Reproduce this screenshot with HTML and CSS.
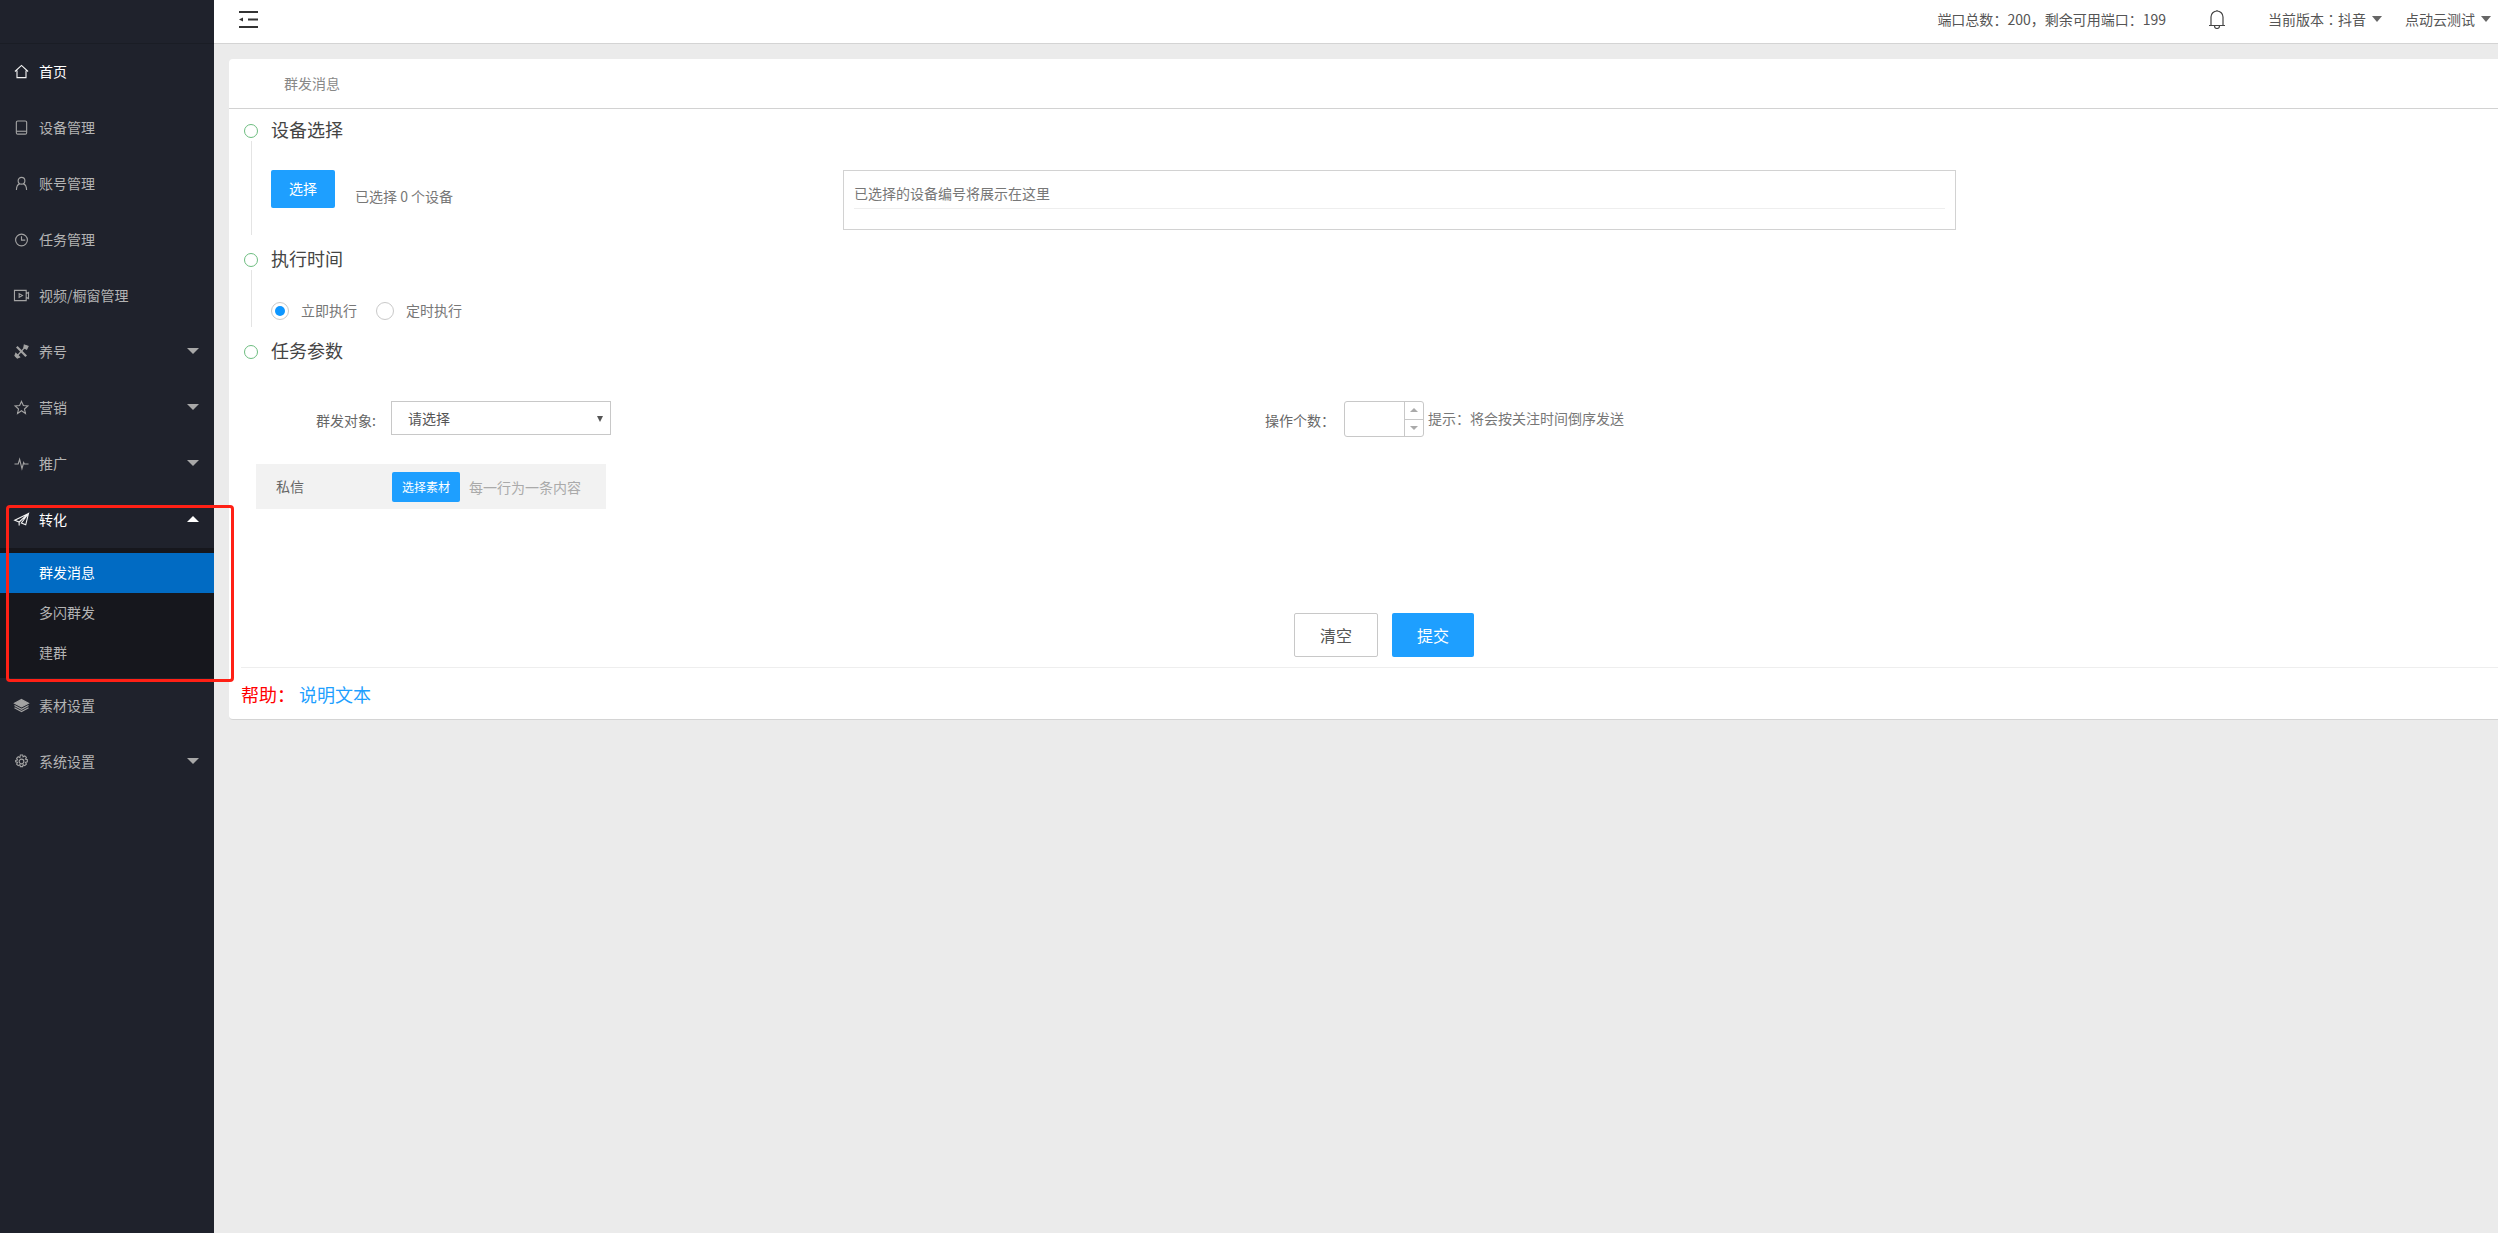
FILE: index.html
```html
<!DOCTYPE html>
<html lang="zh-CN">
<head>
<meta charset="utf-8">
<title>群发消息</title>
<link rel="stylesheet" href="styles.css">
</head>
<body>
<div class="app">
  <aside class="sidebar">
    <div class="logo"></div>
    <nav class="menu">
      <a class="item active"><svg class="ico" viewBox="0 0 16 16"><path d="M1 8 8 1.500 15 8M3.200 7v7.500h9.600V7"/></svg><span>首页</span></a>
      <a class="item"><svg class="ico" viewBox="0 0 16 16"><rect x="2.500" y="1" width="11" height="14" rx="1.500"/><path d="M2.500 12h11"/></svg><span>设备管理</span></a>
      <a class="item"><svg class="ico" viewBox="0 0 16 16"><circle cx="8" cy="5" r="3.600"/><path d="M2.600 15c0-4 2-6.200 3.400-6.600M13.400 15c0-4-2-6.200-3.400-6.600"/></svg><span>账号管理</span></a>
      <a class="item"><svg class="ico" viewBox="0 0 16 16"><circle cx="8" cy="8.500" r="6.300"/><path d="M8 4.500v4.200h4"/></svg><span>任务管理</span></a>
      <a class="item"><svg class="ico" viewBox="0 0 16 16"><path d="M.5 2.500h12.500v11H.5zM13 6l2.500-1.200v6.400L13 10"/><path d="M5.500 6 9 8l-3.500 2z"/></svg><span>视频/橱窗管理</span></a>
      <a class="item"><svg class="ico" viewBox="0 0 16 16"><path d="m3 3 10 10" stroke-width="2.400"/><path d="M13 2 3.500 12.500" stroke-width="1.400"/><path class="fill" d="m2 10 4 4-2.500 1L1 12.500zM11 1l4 1.500-1.500 3-3-1.500z"/></svg><span>养号</span><i class="caret"></i></a>
      <a class="item"><svg class="ico" viewBox="0 0 16 16"><path d="m8 1.500 2 4.400 4.800.5-3.600 3.200 1 4.700L8 11.400l-4.200 2.900 1-4.700L1.200 6.400 6 5.900z"/></svg><span>营销</span><i class="caret"></i></a>
      <a class="item"><svg class="ico" viewBox="0 0 16 16"><path d="M.5 8.500h4l1.500-5 2.500 10 1.800-6.500.8 1.500h4.400"/></svg><span>推广</span><i class="caret"></i></a>
      <a class="item active"><svg class="ico" viewBox="0 0 16 16"><path d="M15.500 1.500.8 8.800l4.700 1.900L15.500 1.500 7.800 11.700l4.700 2zM5.500 10.700v3.800"/></svg><span>转化</span><i class="caret up"></i></a>
      <div class="submenu">
        <a class="sub current">群发消息</a>
        <a class="sub">多闪群发</a>
        <a class="sub">建群</a>
      </div>
      <a class="item"><svg class="ico" viewBox="0 0 16 16"><path class="fill" d="M8 1.500 15.500 5.500 8 9.500.5 5.500z"/><path d="M.5 8 8 12l7.500-4M.5 10.500 8 14.500l7.500-4"/></svg><span>素材设置</span></a>
      <a class="item"><svg class="ico" viewBox="0 0 16 16"><circle cx="8" cy="8" r="2.500"/><path d="M6.800 1h2.400l.5 2 1.800-1 1.700 1.700-1 1.800 2 .5v2.400l-2 .5 1 1.800-1.700 1.700-1.800-1-.5 2H6.800l-.5-2-1.800 1-1.700-1.700 1-1.800-2-.5V6.900l2-.5-1-1.800 1.700-1.700 1.800 1z"/></svg><span>系统设置</span><i class="caret"></i></a>
    </nav>
  </aside>

  <main class="main">
    <header class="topbar">
      <svg class="toggle" viewBox="0 0 19 17"><path d="M0 1h19M9 8.500h10M0 16h19"/><path class="solid" d="M4 6.500v4L0 8.500z"/></svg>
      <div class="top-right">
        <span>端口总数<span class="p">：</span>200<span class="p">，</span>剩余可用端口<span class="p">：</span>199</span>
        <svg class="bell" viewBox="0 0 18 20"><path d="M1 16.500h16M3 16.500V8a6 6 0 0 1 12 0v8.500M9 2V1M6.500 17a2.500 2.500 0 0 0 5 0"/></svg>
        <span class="drop">当前版本<span class="p">：</span>抖音<i class="tri"></i></span>
        <span class="drop">点动云测试<i class="tri"></i></span>
      </div>
    </header>

    <section class="card">
      <div class="tabs">群发消息</div>

      <div class="step step-one">
        <div class="rail"><b class="dot"></b><b class="line"></b></div>
        <div class="body">
          <h3 class="title">设备选择</h3>
          <div class="device-row">
            <div class="device-left">
              <button class="btn btn-pick">选择</button>
              <span class="count">已选择 0 个设备</span>
            </div>
            <div class="device-box"><div class="device-hint">已选择的设备编号将展示在这里</div></div>
          </div>
        </div>
      </div>

      <div class="step step-two">
        <div class="rail"><b class="dot"></b><b class="line"></b></div>
        <div class="body">
          <h3 class="title">执行时间</h3>
          <div class="radios">
            <span class="radio on"></span><span class="radio-label">立即执行</span>
            <span class="radio"></span><span class="radio-label">定时执行</span>
          </div>
        </div>
      </div>

      <div class="step step-three">
        <div class="rail"><b class="dot"></b></div>
        <div class="body"><h3 class="title">任务参数</h3></div>
      </div>

      <div class="form">
        <div class="form-row">
          <label class="label">群发对象:</label>
          <div class="select">请选择<i class="select-arrow"></i></div>
          <label class="label-count">操作个数<span class="p">：</span></label>
          <div class="spinner">
            <div class="spin-input"></div>
            <div class="spin-btns"><span class="spin"><i class="spin-up"></i></span><span class="spin"><i class="spin-down"></i></span></div>
          </div>
          <span class="tip">提示<span class="p">：</span>将会按关注时间倒序发送</span>
        </div>
        <div class="panel">
          <span class="panel-name">私信</span>
          <button class="btn btn-material">选择素材</button>
          <span class="panel-tip">每一行为一条内容</span>
        </div>
      </div>

      <div class="actions">
        <button class="btn btn-clear">清空</button>
        <button class="btn btn-submit">提交</button>
      </div>

      <div class="help"><span class="help-key">帮助<span class="p">：</span></span><a class="help-link">说明文本</a></div>
    </section>
  </main>
</div>
<div class="annotation"></div>
</body>
</html>
```
FILE: styles.css
```css
* { box-sizing: border-box; }
html, body { margin: 0; padding: 0; height: 100%; overflow: hidden; }
body {
  font-family: "Noto Sans CJK SC", "Liberation Sans", sans-serif;
  font-size: 14px;
  line-height: 20px;
  color: #666;
  background: #ebebeb;
}
.app { display: flex; height: 1233px; }
/* centred full-width punctuation, as in the reference */
.p { font-family: "Noto Sans CJK TC", "Noto Sans CJK SC", sans-serif; }

/* sidebar */
.sidebar { width: 214px; flex: none; background: #1f222c; color: #b4b4b4; }
.logo { height: 44px; border-bottom: 1px solid #1a1d25; }
.menu { display: flex; flex-direction: column; }
.item { display: flex; align-items: center; height: 56px; padding: 0 15px 2px 14px; }
.item span { margin-left: 10px; flex: 1; }
.ico { width: 15px; height: 15px; flex: none; fill: none; stroke: #a3a3a3; stroke-width: 1.2; overflow: visible; }
.ico .fill { fill: #a3a3a3; }
.item.active .ico { stroke: #f2f2f2; }
.item.active { color: #fff; }
.caret { width: 0; height: 0; border-left: 6px solid transparent; border-right: 6px solid transparent; border-top: 6px solid #a8a8a8; }
.caret.up { border-top: 0; border-bottom: 6px solid #fff; }
.submenu { background: #16171d; padding: 5px 0; }
.sub { display: block; height: 40px; line-height: 38px; padding-left: 39px; }
.sub.current { background: #016bc3; color: #fff; }

/* top bar */
.main { flex: 1; min-width: 0; }
.topbar {
  display: flex; align-items: center; justify-content: space-between;
  height: 44px; padding: 0 7px 5px 25px;
  background: #fff; border-bottom: 1px solid #d4d4d4;
}
.toggle { width: 19px; height: 17px; fill: none; stroke: #333; stroke-width: 2; }
.toggle .solid { fill: #333; stroke: none; }
.top-right { display: flex; align-items: center; color: #555; }
.bell { width: 18px; height: 20px; margin: 0 42px; fill: none; stroke: #444; stroke-width: 1.2; }
.drop { display: flex; align-items: center; }
.drop + .drop { margin-left: 23px; }
.tri { width: 0; height: 0; margin-left: 6px; border-left: 5.5px solid transparent; border-right: 5.5px solid transparent; border-top: 6px solid #666; }

/* card */
.card {
  margin: 15px 0 0 15px; height: 661px; background: #fff;
  border-radius: 4px 0 0 4px; border-bottom: 1px solid #d4d4d4;
}
.tabs { height: 50px; padding-left: 55px; line-height: 48px; color: #888; border-bottom: 1px solid #d2d2d2; }
.step { display: flex; padding-left: 15px; }
.step-one { height: 129px; }
.step-two { height: 92px; }
.step-three { height: 40px; }
.rail { width: 14px; flex: none; display: flex; flex-direction: column; align-items: center; padding-top: 15px; }
.dot { width: 14px; height: 14px; flex: none; border: 1px solid #6dbd7f; border-radius: 50%; }
.line { width: 1px; flex: 1; margin: 3px 0; background: #e4e4e4; }
.body { margin-left: 13px; flex: 1; min-width: 0; }
.title { margin: 0; height: 40px; font-size: 18px; line-height: 40px; font-weight: 400; color: #444; }

.btn { border: 0; padding: 0; font: inherit; border-radius: 2px; background: #1e9fff; color: #fff; }
.device-row { display: flex; margin-top: 21px; }
.device-left { width: 572px; flex: none; display: flex; align-items: flex-start; }
.btn-pick { width: 64px; height: 38px; padding-bottom: 2px; }
.count { margin: 16px 0 0 20px; color: #777; }
.device-box { width: 1113px; height: 60px; padding: 12px 10px 0; border: 1px solid #d2d2d2; }
.device-hint { height: 26px; line-height: 20px; color: #777; border-bottom: 1px solid #eee; }

.radios { display: flex; align-items: center; height: 18px; margin-top: 24px; }
.radio { width: 18px; height: 18px; flex: none; border: 1px solid #c9c9c9; border-radius: 50%; display: flex; align-items: center; justify-content: center; }
.radio.on::after { content: ""; width: 10px; height: 10px; border-radius: 50%; background: #0d96ff; }
.radio-label { margin: 0 19px 2px 12px; color: #777; }

.form { padding: 31px 0 0 27px; }
.form-row { display: flex; align-items: flex-start; height: 36px; }
.label { width: 120px; flex: none; margin-right: 15px; padding-top: 9px; text-align: right; color: #666; }
.select { position: relative; width: 220px; height: 34px; padding: 6px 16px; line-height: 20px; color: #555; border: 1px solid #c8c8c8; }
.select-arrow { position: absolute; right: 7px; top: 14px; width: 0; height: 0; border-left: 3px solid transparent; border-right: 3px solid transparent; border-top: 6px solid #555; }
.label-count { margin-left: 654px; width: 79px; flex: none; padding-top: 9px; color: #666; }
.spinner { display: flex; width: 80px; height: 36px; border: 1px solid #c8c8c8; border-radius: 3px; }
.spin-input { flex: 1; }
.spin-btns { width: 19px; display: flex; flex-direction: column; border-left: 1px solid #c8c8c8; }
.spin { flex: 1; display: flex; align-items: center; justify-content: center; }
.spin + .spin { border-top: 1px solid #c8c8c8; }
.spin-up, .spin-down { width: 0; height: 0; border-left: 4px solid transparent; border-right: 4px solid transparent; }
.spin-up { border-bottom: 4px solid #aaa; }
.spin-down { border-top: 4px solid #aaa; }
.tip { margin-left: 4px; padding-top: 7px; color: #777; }

.panel { display: flex; align-items: center; width: 350px; height: 45px; margin-top: 27px; background: #f2f2f2; }
.panel-name { width: 136px; flex: none; padding-left: 20px; margin-bottom: 2px; color: #666; }
.btn-material { width: 68px; height: 30px; font-size: 12px; }
.panel-tip { margin-left: 9px; color: #aaa; }

.actions { display: flex; justify-content: center; gap: 14px; margin-top: 104px; padding-left: 41px; }
.btn-clear, .btn-submit { height: 44px; font-size: 16px; }
.btn-clear { width: 84px; background: #fff; color: #555; border: 1px solid #c8c8c8; }
.btn-submit { width: 82px; }

.help { display: flex; align-items: center; height: 52px; margin: 10px 0 0 12px; border-top: 1px solid #eee; font-size: 18px; }
.help-key { width: 58px; color: #f00; }
.help-link { color: #1e9fff; }

/* red review mark drawn over the screenshot */
.annotation { position: absolute; left: 6px; top: 505px; width: 228px; height: 177px; border: 3px solid #ff2015; border-radius: 4px; }
```
